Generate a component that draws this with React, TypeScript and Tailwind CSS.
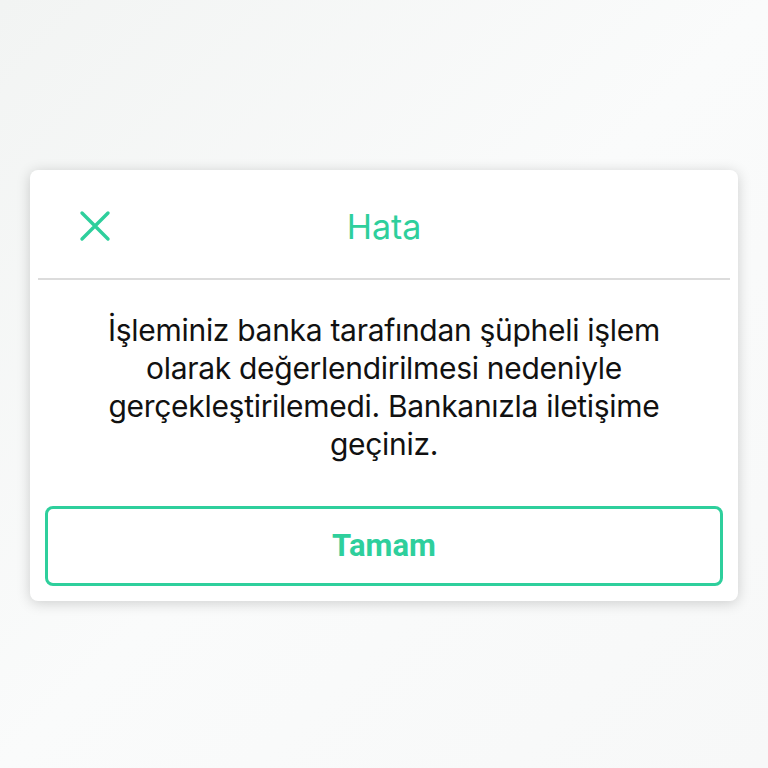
import React from 'react';

const App: React.FC = () => {
  return (
    <div className="flex h-[768px] w-[768px] flex-col bg-gradient-to-br from-[#f2f4f3] via-[#fafbfb] to-[#f7f8f8] pt-[170px]" style={{ fontFamily: 'Inter, "Noto Sans", sans-serif' }}>
      <div className="mx-[30px] flex h-[431px] flex-col rounded-[8px] bg-white shadow-[0_2px_14px_rgba(0,0,0,0.18)]">
        {/* başlık */}
        <div className="relative flex h-[108px] items-center justify-center">
          <button type="button" className="absolute left-[48px] top-[39px] text-[#2ecf9c]">
            <svg width="34" height="34" viewBox="0 0 34 34" fill="none" stroke="currentColor" strokeWidth="3.4" strokeLinecap="round">
              <path d="M4 4 L30 30 M30 4 L4 30" />
            </svg>
          </button>
          <h1 className="mt-[5px] text-[34px] font-normal text-[#2ecf9c]">Hata</h1>
        </div>
        <div className="mx-[8px] h-[2px] bg-[#dcdcdc]" />

        {/* mesaj */}
        <p className="mx-auto mt-[31px] w-[660px] text-center text-[30px] leading-[38px] tracking-[-0.3px] text-[#111]">
          İşleminiz banka tarafından şüpheli işlem
          <br />
          olarak değerlendirilmesi nedeniyle
          <br />
          gerçekleştirilemedi. Bankanızla iletişime
          <br />
          geçiniz.
        </p>

        <button
          type="button"
          className="mx-[15px] mt-auto mb-[15px] flex h-[80px] items-center justify-center rounded-[8px] border-[3px] border-[#2ecf9c] text-[31px] font-bold text-[#2ecf9c]"
          style={{ fontFamily: 'Roboto, "Noto Sans", sans-serif' }}
        >
          Tamam
        </button>
      </div>
    </div>
  );
};

export default App;
